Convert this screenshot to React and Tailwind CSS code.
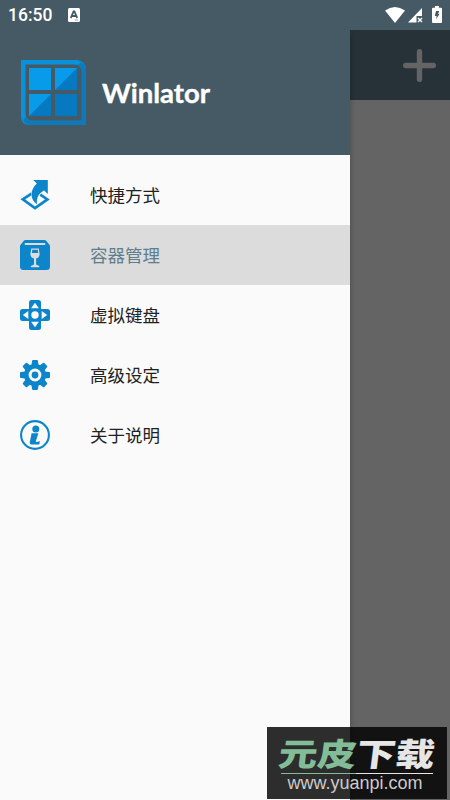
const items = [
  { label: '快捷方式', Icon: ShortcutIcon },
  { label: '容器管理', Icon: ContainerIcon, active: true },
  { label: '虚拟键盘', Icon: GamepadIcon },
  { label: '高级设定', Icon: GearIcon },
  { label: '关于说明', Icon: InfoIcon },
];

function ShortcutIcon() {
  return (
    <svg className="w-[30px] h-[30px]" viewBox="0 0 30 30">
      <path
        d="M11.5 13.6 L2.8 19.4 L15 28 L27.4 19.4 L20.3 14.6"
        fill="none"
        stroke="#0c85cb"
        strokeWidth="2.7"
      />
      <path
        d="M13.2 0 H27.8 V14 L24 10.6 C18.5 13.5 16.3 18 17 24.3 C10.2 19.5 9.2 11 16.8 3.6 Z"
        fill="#0c85cb"
        stroke="#fafafa"
        strokeWidth="1"
        paintOrder="stroke"
      />
    </svg>
  );
}

function ContainerIcon() {
  return (
    <svg className="w-[30px] h-[30px]" viewBox="0 0 30 30">
      <path d="M5.5 0 H24.5 Q25.5 0 26.2 .8 L30 5.5 V26.5 Q30 30 26.5 30 H3.5 Q0 30 0 26.5 V5.5 L3.8 .8 Q4.5 0 5.5 0 Z" fill="#0c85cb" />
      <path d="M5.5 4 H24.5" stroke="#dcdcdc" strokeWidth="1.8" strokeLinecap="round" />
      <path d="M11.2 8.5 H18.8 L19.6 14 C19.6 16.8 18 18.2 16.1 18.6 V24.5 L19.3 26 V27.2 H10.9 V26 L14 24.5 V18.6 C12.1 18.2 10.4 16.8 10.4 14 Z" fill="#dcdcdc" />
      <path d="M12.3 9.8 H17.8 L18.2 13 H12 Z" fill="#0c85cb" />
    </svg>
  );
}

function GamepadIcon() {
  return (
    <svg className="w-[30px] h-[30px]" viewBox="0 0 30 30">
      <path
        d="M11.5 0 H18.5 Q21 0 21 2.5 V9 H27.5 Q30 9 30 11.5 V18.5 Q30 21 27.5 21 H21 V27.5 Q21 30 18.5 30 H11.5 Q9 30 9 27.5 V21 H2.5 Q0 21 0 18.5 V11.5 Q0 9 2.5 9 H9 V2.5 Q9 0 11.5 0 Z"
        fill="#0c85cb"
      />
      <g fill="#fafafa">
        <path d="M15 2.8 L18.9 8.3 H11.1 Z" />
        <path d="M15 27.2 L18.9 21.7 H11.1 Z" />
        <path d="M2.8 15 L8.3 11.1 V18.9 Z" />
        <path d="M27.2 15 L21.7 11.1 V18.9 Z" />
        <circle cx="15" cy="15" r="3.7" />
      </g>
    </svg>
  );
}

function GearIcon() {
  const teeth = [0, 45, 90, 135, 180, 225, 270, 315];
  return (
    <svg className="w-[30px] h-[30px]" viewBox="0 0 30 30" fill="#0c85cb">
      <circle cx="15" cy="15" r="8.7" fill="none" stroke="#0c85cb" strokeWidth="4.6" />
      {teeth.map((angle) => (
        <path
          key={angle}
          d="M13.1 0 H16.9 Q17.7 0 17.9 .8 L18.6 5.5 H11.4 L12.1 .8 Q12.3 0 13.1 0 Z"
          transform={`rotate(${angle} 15 15)`}
        />
      ))}
      <circle cx="15" cy="15" r="3.4" />
    </svg>
  );
}

function InfoIcon() {
  return (
    <svg className="w-[30px] h-[30px]" viewBox="0 0 30 30" fill="#0c85cb">
      <circle cx="15" cy="15" r="13.9" fill="none" stroke="#0c85cb" strokeWidth="2.1" />
      <circle cx="15.8" cy="9" r="3.5" />
      <path d="M11.6 13.3 H18.4 L15.9 21 Q15.6 22 16.6 21.9 L20 21.2 L19.2 24.4 H11.2 Q9.2 24.3 9.8 22 Z" />
    </svg>
  );
}

function Logo() {
  return (
    <svg className="w-[66px] h-[66px] shrink-0" viewBox="0 0 66 66">
      <path d="M0 0 H56 Q65 1 65 10 L61 13 Q61 4.5 53 4.5 H4.5 V53 Q4.5 61 12 61 L9 65 Q0 65 0 56 Z" fill="#0991dc" />
      <path d="M60 2 Q65 5 65 10 V65 H9 Q4 64 2 60 L5 57 Q7 60.5 12 60.5 H60.5 V13 Q60.5 7 57 5 Z" fill="#0c7abb" />
      <path d="M8 8 H30 V30 H8 Z M34 8 H56 V30 H34 Z M8 34 H30 V56 H8 Z" fill="#079bea" />
      <path d="M56 8 V30 H34 Z M30 34 V56 H8 Z M34 34 H56 V56 H34 Z" fill="#0679c1" />
    </svg>
  );
}

function StatusBar() {
  return (
    <div className="flex h-[30px] items-center bg-[#455a64] pl-[8px] pr-[8px] pt-[2px] text-white">
      <span className="font-['Roboto'] text-[17.5px] font-medium leading-none">16:50</span>
      <svg className="ml-[16px] mb-[2px] w-[12px] h-[14px]" viewBox="0 0 13 14" preserveAspectRatio="none">
        <rect width="13" height="14" rx="1.5" fill="#fff" />
        <path d="M3 10 L6 3.5 H7 L10 10 M4.5 8 H8.5" fill="none" stroke="#455a64" strokeWidth="1.8" />
        <path d="M7.5 12 H11" stroke="#9aa7ad" strokeWidth="1" />
      </svg>
      <div className="mb-[3px] ml-auto flex items-center">
        <svg className="w-[20px] h-[16px]" viewBox="0 0 20 16" fill="#fff">
          <path d="M0 3.5 Q10 -3.5 20 3.5 L10 16 Z" />
        </svg>
        <svg className="ml-[3px] w-[15px] h-[16px]" viewBox="0 0 15 16" fill="#fff">
          <path d="M0 15.5 L14 1 V9 H8.5 V15.5 Z" />
          <path d="M10 11 L14 15 M14 11 L10 15" stroke="#fff" strokeWidth="1.3" />
        </svg>
        <svg className="ml-[9px] w-[10px] h-[17px]" viewBox="0 0 10 17">
          <path d="M3 0 H7 V1.7 H9 Q10 1.7 10 2.7 V16 Q10 17 9 17 H1 Q0 17 0 16 V2.7 Q0 1.7 1 1.7 H3 Z" fill="#fff" />
          <path d="M4 5 H7.2 L6.2 8 H7.5 L4 13.5 L4.7 10 H2.8 Z" fill="#455a64" />
        </svg>
      </div>
    </div>
  );
}

function Watermark() {
  return (
    <div className="absolute left-[267px] top-[727px] z-20 flex h-[72px] w-[180px] flex-col items-center overflow-hidden bg-black/82">
      <div className="mt-[6px] mb-px flex h-[39px] items-center justify-center whitespace-nowrap font-['Noto_Sans_CJK_SC',sans-serif] text-[39px] font-black leading-none text-[#e6e6e6] -skew-x-6 scale-y-[0.82]">
        <span className="text-[#83bd98]">元皮</span>
        <span>下载</span>
      </div>
      <div className="flex h-px w-[152px] shrink-0">
        <div className="w-[75px] bg-[#83bd98]" />
        <div className="flex-1 bg-[#e6e6e6]" />
      </div>
      <div className="mr-[4px] font-['Liberation_Sans',sans-serif] text-[18px] leading-[19px] text-[#cccccc]">
        www.yuanpi.com
      </div>
    </div>
  );
}

function App() {
  return (
    <div className="relative flex h-[800px] w-[450px] flex-col overflow-hidden bg-[#646464]">
      <StatusBar />
      <div className="flex flex-1">
        <div className="z-10 flex w-[350px] flex-col bg-[#fafafa] shadow-[1px_4px_5px_rgba(0,0,0,0.2)]">
          <div className="flex h-[125px] items-center bg-[#455a64] pl-[21px]">
            <Logo />
            <span className="ml-[15px] font-['Lato',sans-serif] text-[27.5px] font-bold leading-none text-white [-webkit-text-stroke:0.4px_white]">
              Winlator
            </span>
          </div>
          <nav className="pt-[10px]">
            {items.map(({ label, Icon, active }) => (
              <div
                key={label}
                className={`flex h-[60px] items-center pl-[20px] ${
                  active ? 'bg-[#dcdcdc] text-[#607d8b]' : 'text-[#212121]'
                }`}
              >
                <Icon />
                <span className="ml-[40px] font-['Noto_Sans_CJK_SC',sans-serif] text-[17.5px] leading-none">{label}</span>
              </div>
            ))}
          </nav>
        </div>
        <div className="flex-1">
          <div className="flex h-[70px] items-center justify-end bg-[#263238] pr-[14px]">
            <svg className="w-[33px] h-[33px]" viewBox="0 0 33 33">
              <path d="M16.5 2.7 V30.3 M2.7 16.5 H30.3" stroke="#646464" strokeWidth="5.4" strokeLinecap="round" />
            </svg>
          </div>
        </div>
      </div>
      <Watermark />
    </div>
  );
}

export default App;
